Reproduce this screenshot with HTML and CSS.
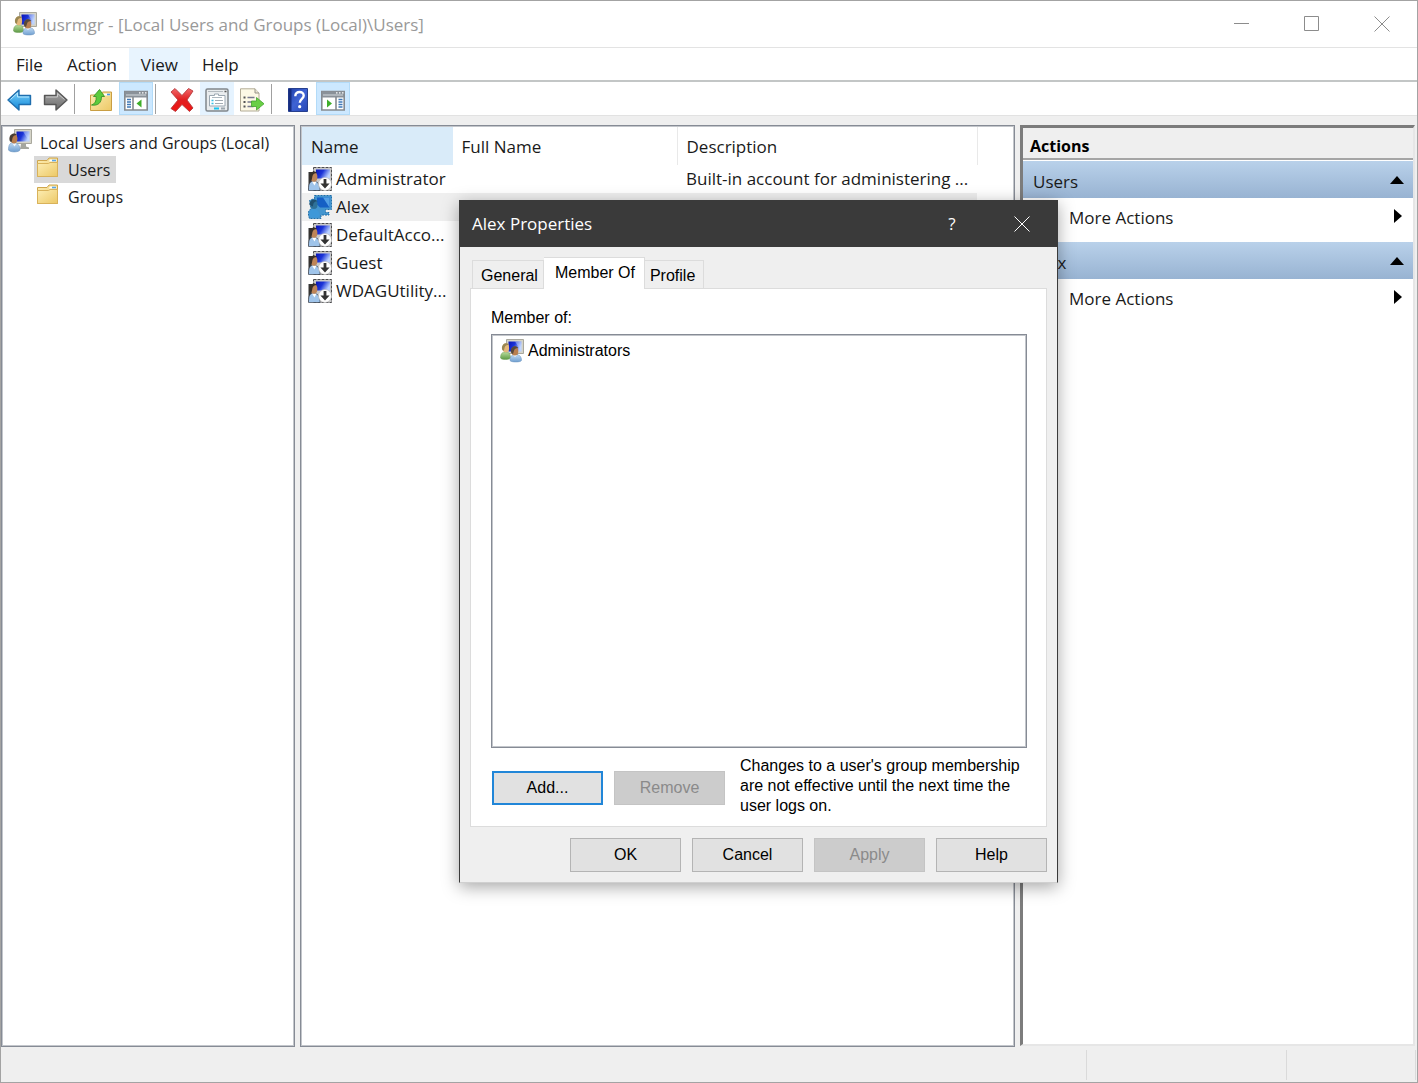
FILE: index.html
```html
<!DOCTYPE html>
<html lang="en">
<head>
<meta charset="utf-8">
<meta name="viewport" content="width=device-width, initial-scale=1">
<title>lusrmgr - [Local Users and Groups (Local)\Users]</title>
<link rel="stylesheet" href="styles.css">
</head>
<body>
<svg class="defs" aria-hidden="true">
  <defs>
    <linearGradient id="screen" x1="0" y1="0" x2="1" y2="0.4"><stop offset="0" stop-color="#0a14b8"/><stop offset="0.5" stop-color="#1c35d8"/><stop offset="1" stop-color="#b9d0ff"/></linearGradient>
    <linearGradient id="folderFill" x1="0" y1="0" x2="1" y2="1"><stop offset="0" stop-color="#fdeeb4"/><stop offset="1" stop-color="#ecc866"/></linearGradient>
    <linearGradient id="blueArrow" x1="0" y1="0" x2="0" y2="1"><stop offset="0" stop-color="#7fd4fb"/><stop offset="1" stop-color="#1187d8"/></linearGradient>
    <linearGradient id="grayArrow" x1="0" y1="0" x2="0" y2="1"><stop offset="0" stop-color="#a8a8a8"/><stop offset="1" stop-color="#6c6c6c"/></linearGradient>
    <linearGradient id="redFill" x1="0" y1="0" x2="0" y2="1"><stop offset="0" stop-color="#f2696b"/><stop offset="0.5" stop-color="#e01f20"/><stop offset="1" stop-color="#f01512"/></linearGradient>
    <linearGradient id="bookFill" x1="0" y1="0" x2="1" y2="1"><stop offset="0" stop-color="#1f3fa8"/><stop offset="0.5" stop-color="#3f63d4"/><stop offset="1" stop-color="#2747b4"/></linearGradient>
    <linearGradient id="blueBody" x1="0" y1="0" x2="0" y2="1"><stop offset="0" stop-color="#c4dcf4"/><stop offset="1" stop-color="#6f9fd0"/></linearGradient>
    <linearGradient id="greenBody" x1="0" y1="0" x2="0" y2="1"><stop offset="0" stop-color="#b9dc9c"/><stop offset="1" stop-color="#5d9a45"/></linearGradient>
    <symbol id="monitor" viewBox="0 0 24 24">
      <path d="M6.500 .5h17v14h-17z" fill="#d5d4c8" stroke="#a9a89e"/>
      <path d="M8.500 2.500h13v10h-13z" fill="url(#screen)"/>
      <path d="M15 2.500h6.500v10z" fill="#cfe0ff" opacity=".45"/>
      <path d="M13 15h5v2.500l3 1v1.500h-9z" fill="#a5a69f"/>
    </symbol>
    <symbol id="user" viewBox="0 0 24 24">
      <use href="#monitor"/>
      <path d="M.5 21c0-5 1.500-7.500 5-7.500s6.500 2.500 6.500 7.500c-1 2.500-10.500 2.500-11.500 0z" fill="url(#blueBody)" stroke="#6c93bd" stroke-width=".6"/>
      <path d="M4.500 14.500l2 3 2-3z" fill="#f4f8fc"/>
      <ellipse cx="6" cy="9.800" rx="3.500" ry="4.800" fill="#b87d4d"/>
      <path d="M1.500 11c-1-7 6-8 7.500-5-2.500 0-4 1-4.500 3l-.8 4c-1.500 0-2-1-2.200-2z" fill="#493d33"/>
    </symbol>
    <symbol id="users" viewBox="0 0 24 24">
      <use href="#monitor"/>
      <path d="M.5 19c0-4 1.500-6 5-6s5 2 5 6c-1 2-9 2-10 0z" fill="url(#greenBody)" stroke="#6d9c58" stroke-width=".5"/>
      <ellipse cx="5.800" cy="9" rx="3.300" ry="4.400" fill="#e4b87c"/>
      <path d="M2 10c-.8-6 5.500-7 7-4.200-2.500 0-3.700 .9-4.300 2.500l-.8 3.400c-1.200 0-1.700-.7-1.900-1.700z" fill="#9a8752"/>
      <path d="M10 21.500c0-4 1.500-6 5.500-6s6 2 6 6c-1 2-10.500 2-11.500 0z" fill="url(#blueBody)" stroke="#6c93bd" stroke-width=".5"/>
      <path d="M13 16l2 2 2-2z" fill="#f4f8fc"/>
      <ellipse cx="14.800" cy="12" rx="3.500" ry="4.500" fill="#b97f50"/>
      <path d="M11 13c-1-6 5.500-7 7.200-4-2.500 0-3.700 1-4.200 2.800l-.9 3c-1.300 0-1.900-.8-2.100-1.800z" fill="#57493b"/>
    </symbol>
    <symbol id="user-disabled" viewBox="0 0 24 24">
      <path d="M5.500 .5h18v23h-18z" fill="#c9c9ca" stroke="#4d4d4f" stroke-dasharray="3 1"/>
      <path d="M8 2.500h14v9h-14z" fill="url(#screen)"/>
      <path d="M.5 5h7v18h-7z" fill="#353535"/>
      <path d="M.5 22c0-5 1.500-8 5-8s6.500 3 6.500 8v1.500h-11.500z" fill="#9fc4ea" stroke="#3c444f" stroke-width=".7"/>
      <path d="M4 14.500l2.500 4 2-4z" fill="#fff"/>
      <ellipse cx="6" cy="10" rx="3.400" ry="4.700" fill="#be8558"/>
      <path d="M1.500 11c-1-7 6-8 7.500-5-2.500 0-4 1-4.500 3l-.8 4c-1.500 0-2-1-2.200-2z" fill="#393029"/>
      <circle cx="17" cy="17" r="6.500" fill="#fff" stroke="#b8b8b8" stroke-width=".6"/>
      <path d="M15.600 12h2.800v4.500h3.200l-4.600 5-4.600-5h3.200z" fill="#333"/>
    </symbol>
    <symbol id="user-selected" viewBox="0 0 24 24">
      <path d="M6.500 .5h17v14h-6v3h3.500v2.500h-8v3.500h-11.500l-1-3v-4l2.500-3-1.500-8 5-2z" fill="#4395cf" stroke="#206fa8" stroke-dasharray="2 1"/>
      <path d="M9 2.500h12.500v10h-9.500l-3-3z" fill="#155fc4"/>
      <path d="M15 2.500h6.500v10z" fill="#53a0e4"/>
      <ellipse cx="6" cy="9.500" rx="3.500" ry="4.600" fill="#2e7198"/>
      <path d="M1.500 10c-.5-6 6.500-7 8-3.500-4-.5-4 2-4.700 5z" fill="#20506f"/>
      <path d="M1 20c0-4 2-5.500 5-5.500s5.500 2 5.500 5.500-10 4-10.500 0z" fill="#3f98d8"/>
    </symbol>
    <symbol id="folder" viewBox="0 0 24 24">
      <path d="M1.500 4.500h9.500l2-2.500h8.500v18.500h-20z" fill="url(#folderFill)" stroke="#cfa64d"/>
      <path d="M14 3.500h6.500v2h-7.500z" fill="#fff"/>
      <path d="M16 3.700h4v1.600h-4z" fill="#5aa6e6"/>
      <path d="M1.500 7.500h11l1.500-1h7.500v14h-20z" fill="url(#folderFill)" stroke="#d9b25a"/>
    </symbol>
    <symbol id="back" viewBox="0 0 26 24">
      <path d="M1 12L12 2v5.500h11.500v9H12V22z" fill="url(#blueArrow)" stroke="#1f6eae" stroke-width="1.400" stroke-linejoin="round"/>
      <path d="M3.500 11.500L10.500 5v4h11.500" fill="none" stroke="#b5e8ff"/>
    </symbol>
    <symbol id="forward" viewBox="0 0 26 24">
      <path d="M25 12L14 2v5.500H2.500v9H14V22z" fill="url(#grayArrow)" stroke="#575757" stroke-width="1.400" stroke-linejoin="round"/>
      <path d="M4 9h11.500V5.500l7 6" fill="none" stroke="#c9c9c9"/>
    </symbol>
    <symbol id="folder-up" viewBox="0 0 24 24">
      <path d="M1.500 7h10l2-3h9v18.500h-21z" fill="url(#folderFill)" stroke="#c99e43"/>
      <path d="M15 5.500h6v2h-6z" fill="#fff"/><path d="M18 5.700h3v1.600h-3z" fill="#4d9be0"/>
      <path d="M2.500 17c3.500-1 5-4 4.700-8.500h-2.700l6-7 5 7h-3c0 6-3 9.500-10 8.500z" fill="#5ccb3c" stroke="#38952a" stroke-width=".9"/>
    </symbol>
    <symbol id="window-frame" viewBox="0 0 24 24">
      <path d="M.8 3.500h22.400v18.500h-22.400z" fill="#fff" stroke="#868a8f" stroke-width="1.600"/>
      <path d="M1 3.500h22v6h-22z" fill="#8a9199"/>
      <path d="M2 7h20" stroke="#d5dade"/><path d="M15 4.800h1.500m1.500 0h1.500m1.500 0h1.500" stroke="#fff" stroke-width="1.300"/>
    </symbol>
    <symbol id="tree-pane" viewBox="0 0 24 24">
      <use href="#window-frame"/><path d="M9 9v13" stroke="#868a8f" stroke-width="1.600"/>
      <path d="M3 11.500h4M3 14h4M3 16.500h4M3 19h4" stroke="#3e78b8" stroke-width="1.300"/>
      <path d="M17.500 11.500v8l-5-4z" fill="#3fae2a"/>
    </symbol>
    <symbol id="action-pane" viewBox="0 0 24 24">
      <use href="#window-frame"/><path d="M15 9v13" stroke="#868a8f" stroke-width="1.600"/>
      <path d="M17.500 11.500h4M17.500 14h4M17.500 16.500h4M17.500 19h4" stroke="#3e78b8" stroke-width="1.300"/>
      <path d="M6 11.500v8l5-4z" fill="#3fae2a"/>
    </symbol>
    <symbol id="delete" viewBox="0 0 24 24">
      <path d="M1 4l4-3.500 7 7 6.500-7 4.500 2.500-6 9 6 8-3.500 3.500-7.500-7-6.500 7-4.500-3 7-8.500z" fill="url(#redFill)" stroke="#b53a3c" stroke-width=".9" stroke-linejoin="round"/>
    </symbol>
    <symbol id="properties" viewBox="0 0 24 24">
      <rect x="1" y="1" width="22" height="22" rx="1.500" fill="#e9ecee" stroke="#80868c" stroke-width="1.500"/>
      <path d="M3 3.500h15" stroke="#b4babf"/><path d="M19.500 3.500h2" stroke="#555" stroke-width="1.500"/>
      <path d="M4.500 7.500h5v-1.500h4v1.500h6.500v10.500h-15.500z" fill="#fff" stroke="#9ba7b1"/>
      <path d="M7 9.500h10" stroke="#aeb8c0"/>
      <path d="M6.500 12.500h2M6.500 15.500h2" stroke="#39bfe5" stroke-width="1.600"/><path d="M10 12.500h8M10 15.500h8" stroke="#a3acb3" stroke-width="1.200"/>
      <path d="M9 20.500h5" stroke="#16c4ef" stroke-width="2"/><path d="M16 20.500h4" stroke="#9da7ae" stroke-width="2"/>
    </symbol>
    <symbol id="export" viewBox="0 0 26 24">
      <path d="M1.500 .8h14.500l4 4.200v18h-18.500z" fill="#fdf9e6" stroke="#b2ab96"/>
      <path d="M16 .8v4.200h4" fill="#e9e5d3" stroke="#98948a"/>
      <path d="M4.500 9.500h2M4.500 14h2M4.500 18.500h2" stroke="#555" stroke-width="1.800"/>
      <path d="M8.500 9.500h7M8.500 14h5M8.500 18.500h6" stroke="#77798f" stroke-width="1.500"/>
      <path d="M12.500 13h5v-3.500l7.500 6.300-7.500 6.200v-3.500h-5z" fill="#69cf45" stroke="#44a32f" stroke-width=".8"/>
    </symbol>
    <symbol id="book" viewBox="0 0 20 24">
      <path d="M.5 .5h19v23h-19z" fill="url(#bookFill)" stroke="#27408f"/><path d="M2 1v22" stroke="#162c80" stroke-width="3"/>
      <path d="M7.300 8.200c0-5.700 8.600-5.500 8.400-.4-.1 3.100-3.800 3.300-3.900 7" fill="none" stroke="#fff" stroke-width="2.400"/>
      <circle cx="11.700" cy="18.700" r="1.600" fill="#fff"/>
    </symbol>
  </defs>
</svg>

<div class="window">
  <header class="titlebar">
    <svg class="icon"><use href="#users"/></svg>
    <h1 class="window-title">lusrmgr - [Local Users and Groups (Local)\Users]</h1>
    <div class="window-buttons">
      <button type="button" aria-label="Minimize"><svg viewBox="0 0 16 16"><path d="M0 7.500h15"/></svg></button>
      <button type="button" aria-label="Maximize"><svg viewBox="0 0 16 16"><path d="M.5 .5h14v14h-14z"/></svg></button>
      <button type="button" aria-label="Close"><svg viewBox="0 0 16 16"><path d="M.5 .5l15 15M15.500 .5l-15 15"/></svg></button>
    </div>
  </header>

  <nav class="menubar" aria-label="Menu">
    <button type="button">File</button>
    <button type="button">Action</button>
    <button type="button" class="hot">View</button>
    <button type="button">Help</button>
  </nav>

  <div class="toolbar" role="toolbar" aria-label="Tools">
    <button type="button" aria-label="Back"><svg class="icon-wide"><use href="#back"/></svg></button>
    <button type="button" aria-label="Forward"><svg class="icon-wide"><use href="#forward"/></svg></button>
    <span class="separator"></span>
    <button type="button" aria-label="Up one level"><svg class="icon"><use href="#folder-up"/></svg></button>
    <button type="button" class="checked" aria-label="Show or hide console tree"><svg class="icon"><use href="#tree-pane"/></svg></button>
    <span class="separator"></span>
    <button type="button" aria-label="Delete"><svg class="icon"><use href="#delete"/></svg></button>
    <button type="button" class="hot" aria-label="Properties"><svg class="icon"><use href="#properties"/></svg></button>
    <button type="button" aria-label="Export list"><svg class="icon-wide"><use href="#export"/></svg></button>
    <span class="separator"></span>
    <button type="button" aria-label="Help"><svg class="icon"><use href="#book"/></svg></button>
    <button type="button" class="checked" aria-label="Show or hide action pane"><svg class="icon"><use href="#action-pane"/></svg></button>
  </div>

  <main class="panes">
    <nav class="pane tree" aria-label="Console tree">
      <a class="tree-item" href="#root"><svg class="icon"><use href="#user"/></svg><span>Local Users and Groups (Local)</span></a>
      <a class="tree-item child selected" href="#users-list"><svg class="icon"><use href="#folder"/></svg><span>Users</span></a>
      <a class="tree-item child" href="#groups"><svg class="icon"><use href="#folder"/></svg><span>Groups</span></a>
    </nav>

    <section class="pane list" id="users-list" aria-label="Users">
      <table class="user-table">
        <colgroup><col class="col-name"><col class="col-full"><col class="col-desc"></colgroup>
        <thead><tr><th class="sorted">Name</th><th>Full Name</th><th>Description</th></tr></thead>
        <tbody>
          <tr><td><div class="user"><svg class="icon"><use href="#user-disabled"/></svg>Administrator</div></td><td></td><td>Built-in account for administering ...</td></tr>
          <tr class="selected"><td><div class="user"><svg class="icon"><use href="#user-selected"/></svg>Alex</div></td><td></td><td></td></tr>
          <tr><td><div class="user"><svg class="icon"><use href="#user-disabled"/></svg>DefaultAcco...</div></td><td></td><td></td></tr>
          <tr><td><div class="user"><svg class="icon"><use href="#user-disabled"/></svg>Guest</div></td><td></td><td></td></tr>
          <tr><td><div class="user"><svg class="icon"><use href="#user-disabled"/></svg>WDAGUtility...</div></td><td></td><td></td></tr>
        </tbody>
      </table>
    </section>

    <aside class="actions">
      <h2 class="actions-title">Actions</h2>
      <button type="button" class="group">Users<svg viewBox="0 0 14 8"><path d="M0 8l7-8 7 8z"/></svg></button>
      <button type="button" class="action">More Actions<svg viewBox="0 0 8 14"><path d="M0 0l8 7-8 7z"/></svg></button>
      <button type="button" class="group">Alex<svg viewBox="0 0 14 8"><path d="M0 8l7-8 7 8z"/></svg></button>
      <button type="button" class="action">More Actions<svg viewBox="0 0 8 14"><path d="M0 0l8 7-8 7z"/></svg></button>
    </aside>
  </main>

  <footer class="statusbar"><span></span><span></span><span></span></footer>
</div>

<div class="dialog" role="dialog" aria-labelledby="dialog-title">
  <header class="dialog-titlebar">
    <h2 id="dialog-title">Alex Properties</h2>
    <button type="button" class="dialog-help" aria-label="Context help">?</button>
    <button type="button" aria-label="Close dialog"><svg viewBox="0 0 16 16"><path d="M.5 .5l15 15M15.500 .5l-15 15"/></svg></button>
  </header>
  <div class="dialog-body">
    <div class="tabs" role="tablist">
      <button type="button" role="tab">General</button>
      <button type="button" role="tab" class="active" aria-selected="true">Member Of</button>
      <button type="button" role="tab">Profile</button>
    </div>
    <section class="sheet" role="tabpanel">
      <h3 class="list-label" id="member-label">Member of:</h3>
      <ul class="member-list" aria-labelledby="member-label">
        <li><svg class="icon"><use href="#users"/></svg>Administrators</li>
      </ul>
      <div class="sheet-footer">
        <button type="button" class="btn default">Add...</button>
        <button type="button" class="btn" disabled>Remove</button>
        <p>Changes to a user's group membership are not effective until the next time the user logs on.</p>
      </div>
    </section>
    <div class="dialog-buttons">
      <button type="button" class="btn">OK</button>
      <button type="button" class="btn">Cancel</button>
      <button type="button" class="btn" disabled>Apply</button>
      <button type="button" class="btn">Help</button>
    </div>
  </div>
</div>
</body>
</html>
```
FILE: styles.css
```css
* { box-sizing: border-box; }

body {
  margin: 0;
  font: 17px/24px "Open Sans", "Noto Sans", sans-serif;
  color: #1a1a1a;
  background: #efefef;
}

h1, h2, h3, p, ul { margin: 0; padding: 0; font-weight: 400; }
button { border: 0; padding: 0; background: none; font: inherit; color: inherit; }
a { color: inherit; text-decoration: none; }
svg { display: block; flex: none; }

.defs { position: absolute; width: 0; height: 0; }
.icon { width: 24px; height: 24px; }
.icon-wide { width: 26px; height: 24px; }

/* Console window */
.window {
  min-height: 100vh;
  display: flex;
  flex-direction: column;
  border: 1px solid #a3a3a3;
  background: #efefef;
}

.titlebar {
  display: flex;
  align-items: center;
  height: 47px;
  padding-left: 12px;
  gap: 5px;
  background: #fff;
  border-bottom: 1px solid #e3e3e3;
}
.window-title { flex: 1; padding-top: 1px; font-size: 17px; color: #999; }
.window-buttons { display: flex; }
.window-buttons button { width: 70px; height: 46px; display: grid; place-items: center; }
.window-buttons svg, .dialog-titlebar svg { width: 16px; height: 16px; fill: none; stroke: #8c8c8c; }

.menubar {
  display: flex;
  height: 34px;
  padding-left: 3px;
  background: #fff;
  border-bottom: 2px solid #c3c6c6;
}
.menubar button { height: 32px; padding: 2px 12px 0; }
.menubar .hot { background: #e8f4fe; }

.toolbar {
  display: flex;
  align-items: center;
  gap: 1px;
  height: 34px;
  padding-left: 2px;
  background: #fff;
  border-bottom: 1px solid #e2e2e2;
}
.toolbar button { width: 34px; height: 33px; padding-top: 2px; display: grid; place-items: center; }
.toolbar .checked { background: #cce8ff; box-shadow: inset 0 0 0 1px #b3dbf8; }
.toolbar .hot { background: #e5f3ff; }
.separator { width: 1px; height: 30px; margin: 0 8px 0 1px; background: #a0a0a0; }

.panes {
  flex: 1;
  display: grid;
  grid-template-columns: 294px 1fr 395px;
  gap: 5px;
  padding: 9px 2px 0 0;
}
.pane, .member-list { border: 1px solid #868b95; box-shadow: inset 0 0 0 1px #c3c6cb; }
.pane { background: #fff; min-width: 0; padding: 1px; }

.tree { display: flex; flex-direction: column; align-items: flex-start; padding: 3px 0 0 6px; }
.tree-item { display: flex; align-items: center; height: 27px; gap: 8px; padding-right: 6px; font-size: 16px; }
.tree-item.child { margin-left: 26px; padding-left: 2px; }
.tree-item .icon { align-self: flex-start; }
.tree-item.selected { background: #d9d9d9; }

.user-table { width: 675px; table-layout: fixed; border-collapse: collapse; }
.col-name { width: 150px; }
.col-full { width: 225px; }
.col-desc { width: 300px; }
.user-table th { height: 38px; padding: 2px 9px 0; font-weight: 400; text-align: left; border-right: 1px solid #e9e9e9; }
.user-table .sorted { background: #d9ebf9; border-color: #d9ebf9; }
.user-table td { height: 28px; padding: 0 9px; white-space: nowrap; }
.user-table td:first-child { padding: 0 0 0 6px; }
.user { display: flex; align-items: center; gap: 4px; }
.user-table .selected { background: #efefef; }

.actions {
  margin-bottom: 1px;
  background: #fff;
  border: 2px solid #e6e6e6;
  border-top: 3px solid #7c7c7c;
  border-left: 3px solid #7c7c7c;
}
.actions-title {
  height: 32px;
  padding: 0 7px;
  font-size: 16px;
  font-weight: 700;
  line-height: 36px;
  color: #000;
  background: #efefef;
  border-bottom: 2px solid #a5a5a5;
}
.group, .action { display: flex; align-items: center; justify-content: space-between; width: 100%; }
.group {
  height: 37px;
  margin-top: 1px;
  padding: 4px 9px 0 10px;
  background: linear-gradient(#b9d1ea, #98b3d2);
}
.group svg { width: 14px; height: 8px; margin-bottom: 3px; fill: #000; }
.action { height: 43px; padding: 0 11px 4px 46px; }
.action svg { width: 8px; height: 14px; margin-bottom: 3px; fill: #000; }

.statusbar { display: grid; grid-template-columns: 1fr 200px 129px; height: 35px; padding: 3px 1px 2px 0; }
.statusbar span { border-right: 1px solid #dadada; }

/* Properties dialog, floating over the console */
.dialog {
  position: absolute;
  left: 459px;
  top: 200px;
  width: 599px;
  background: #efefef;
  border: 1px solid #3a3a3a;
  border-bottom-color: #d0d0d0;
  box-shadow: 0 4px 16px rgba(0, 0, 0, 0.35);
  font: 16px/20px "Liberation Sans", Arial, sans-serif;
  color: #000;
}
.dialog-titlebar {
  display: flex;
  align-items: center;
  height: 46px;
  padding-left: 12px;
  color: #fff;
  background: #3a3a3a;
  font: 17px/24px "Open Sans", "Noto Sans", sans-serif;
}
.dialog-titlebar h2 { flex: 1; font-size: inherit; }
.dialog-titlebar button { width: 70px; height: 46px; display: grid; place-items: center; }
.dialog-titlebar svg { stroke: #fff; }

.dialog-body { padding: 10px; }
.tabs { display: flex; align-items: flex-end; padding-left: 2px; }
.tabs button { height: 28px; padding: 2px 5px 0 8px; border: 1px solid #dcdcdc; border-bottom: 0; }
.tabs button + button { border-left: 0; padding: 2px 8px 0 5px; }
.tabs button.active { height: 32px; margin-bottom: -1px; padding: 0 9px 2px 11px; background: #fff; z-index: 1; }

.sheet { padding: 19px 19px 6px 20px; background: #fff; border: 1px solid #dcdcdc; }
.list-label { font-size: inherit; margin-bottom: 6px; }
.member-list { height: 414px; padding: 2px 8px; list-style: none; }
.member-list li { display: flex; align-items: center; gap: 4px; height: 28px; }
.sheet-footer { display: flex; align-items: center; gap: 11px; padding: 8px 0 0 1px; }
.sheet-footer p { flex: 1; margin-left: 4px; padding-bottom: 4px; }

.btn { width: 111px; height: 34px; flex: none; background: #e1e1e1; border: 1px solid #b4b4b4; }
.btn.default { border: 2px solid #2186d8; }
.btn:disabled { background: #cccccc; border-color: #c4c4c4; color: #8a8a8a; }
.dialog-buttons { display: flex; justify-content: flex-end; gap: 11px; padding-top: 11px; }
```
